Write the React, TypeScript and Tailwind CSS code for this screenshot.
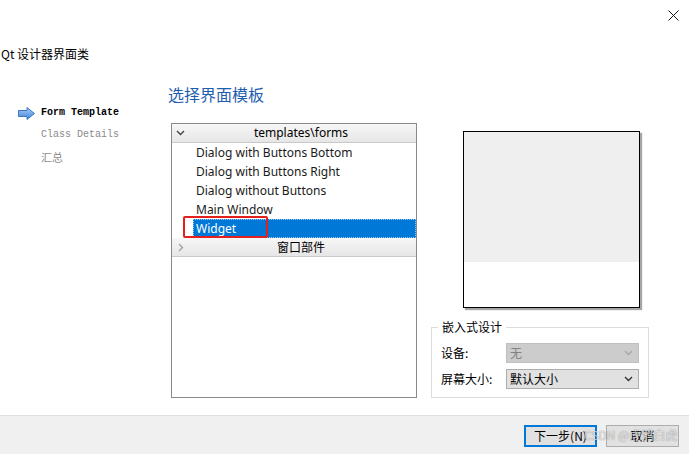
import React from "react";

const cjk = { fontFamily: '"Noto Sans CJK SC", "Noto Sans", sans-serif' };
const ui = { fontFamily: '"Noto Sans", "Noto Sans CJK SC", sans-serif' };
const mono = { fontFamily: '"Liberation Mono", "Noto Sans CJK SC", monospace' };

function ChevronDown({ color = "#444" }: { color?: string }) {
  return (
    <svg width="9" height="6" viewBox="0 0 9 6">
      <path d="M1 1 L4.5 4.5 L8 1" fill="none" stroke={color} strokeWidth="1.4" />
    </svg>
  );
}

function ChevronRight() {
  return (
    <svg width="6" height="9" viewBox="0 0 6 9">
      <path d="M1 1 L4.5 4.5 L1 8" fill="none" stroke="#a0a0a0" strokeWidth="1.3" />
    </svg>
  );
}

function Arrow() {
  return (
    <svg width="17" height="13" viewBox="0 0 17 13">
      <defs>
        <linearGradient id="ag" x1="0" y1="0" x2="0" y2="1">
          <stop offset="0" stopColor="#a9cdf5" />
          <stop offset="1" stopColor="#3f83d6" />
        </linearGradient>
      </defs>
      <path d="M0.5 3.5 H9 V0.5 L16.5 6.5 L9 12.5 V9.5 H0.5 Z" fill="url(#ag)" stroke="#3a78c4" strokeWidth="1" />
    </svg>
  );
}

function HeaderRow({ label, open }: { label: string; open: boolean }) {
  return (
    <div className="h-[19px] flex items-center bg-gradient-to-b from-[#f7f7f7] to-[#e6e6e6] border-b border-[#c9c9c9] relative">
      <div className="w-[14px] flex justify-center pl-[3px]">
        {open ? <ChevronDown /> : <ChevronRight />}
      </div>
      <div className="flex-1 text-center text-[12px] text-black leading-none" style={open ? ui : cjk}>
        {label}
      </div>
    </div>
  );
}

function Item({ label, selected }: { label: string; selected?: boolean }) {
  return (
    <div className="h-[19px] flex items-center pl-[21px]">
      <div
        className={
          selected
            ? "flex-1 h-full flex items-center bg-[#0078d7] text-white pl-[2px] border border-dotted border-[#9cc8ee]"
            : "flex-1 h-full flex items-center text-[#1a1a1a] pl-[3px]"
        }
      >
        <span className="text-[12px] leading-none" style={ui}>{label}</span>
      </div>
    </div>
  );
}

function Combo({ label, disabled }: { label: string; disabled?: boolean }) {
  return (
    <div
      className={
        disabled
          ? "w-[133px] h-[20px] flex items-center justify-between bg-[#cccccc] border border-[#bfbfbf] pl-[3px] pr-[5px]"
          : "w-[133px] h-[20px] flex items-center justify-between bg-[#e1e1e1] border border-[#adadad] pl-[3px] pr-[5px]"
      }
    >
      <span className={disabled ? "text-[12px] text-[#838383] leading-none" : "text-[12px] text-black leading-none"} style={cjk}>
        {label}
      </span>
      <ChevronDown color={disabled ? "#a8a8a8" : "#333"} />
    </div>
  );
}

export default function App() {
  return (
    <div className="w-[689px] h-[454px] bg-white flex flex-col relative overflow-hidden">
      {/* top bar */}
      <div className="h-[44px] flex justify-end items-start pt-[10px] pr-[10px]">
        <svg width="11" height="11" viewBox="0 0 11 11">
          <path d="M0.5 0.5 L10.5 10.5 M10.5 0.5 L0.5 10.5" stroke="#111" strokeWidth="1" />
        </svg>
      </div>
      <div className="h-[20px] flex items-center pl-[1px] text-[12px] text-black" style={cjk}>
        Qt 设计器界面类
      </div>

      {/* main */}
      <div className="flex-1 flex">
        {/* sidebar */}
        <div className="w-[168px] pt-[38px] flex flex-col" style={mono}>
          <div className="h-[22px] flex items-center pl-[18px]">
            <Arrow />
            <span className="ml-[6px] text-[10px] font-semibold text-black leading-none">Form Template</span>
          </div>
          <div className="h-[22px] flex items-center pl-[41px]">
            <span className="text-[10px] text-[#8a8a8a] leading-none">Class Details</span>
          </div>
          <div className="h-[22px] flex items-center pl-[41px]">
            <span className="text-[11px] text-[#8a8a8a] leading-none" style={cjk}>汇总</span>
          </div>
        </div>

        {/* middle */}
        <div className="w-[249px] flex flex-col">
          <div className="h-[59px] flex items-start pt-[22px]">
            <span className="text-[16px] text-[#1f5db0] leading-none" style={cjk}>选择界面模板</span>
          </div>
          <div className="ml-[3px] w-[246px] h-[275px] border border-[#868a8e] bg-white flex flex-col relative">
            <HeaderRow label="templates\forms" open />
            <Item label="Dialog with Buttons Bottom" />
            <Item label="Dialog with Buttons Right" />
            <Item label="Dialog without Buttons" />
            <Item label="Main Window" />
            <Item label="Widget" selected />
            <HeaderRow label="窗口部件" open={false} />
            <div className="absolute left-[11px] top-[92px] w-[85px] h-[22px] border-2 border-[#e3201b] rounded-[2px]" />
          </div>
        </div>

        {/* right */}
        <div className="flex-1 flex flex-col">
          <div className="pt-[67px] pl-[46px]">
            <div className="w-[177px] h-[177px] border border-black bg-white flex flex-col shadow-[2px_2px_1px_rgba(0,0,0,0.35)]">
              <div className="h-[130px] bg-[#efefef]" />
            </div>
          </div>
          <div className="mt-[19px] ml-[14px] w-[218px] h-[71px] border border-[#dcdcdc] relative flex flex-col pl-[9px] pt-[15px] gap-[6px]">
            <div className="absolute left-[6px] top-[-8px] bg-white px-[4px] text-[12px] leading-[14px] text-black" style={cjk}>
              嵌入式设计
            </div>
            <div className="flex items-center">
              <span className="w-[65px] text-[12px] text-black" style={cjk}>设备:</span>
              <Combo label="无" disabled />
            </div>
            <div className="flex items-center">
              <span className="w-[65px] text-[12px] text-black" style={cjk}>屏幕大小:</span>
              <Combo label="默认大小" />
            </div>
          </div>
        </div>
      </div>

      {/* bottom bar */}
      <div className="h-[39px] bg-[#f0f0f0] border-t border-[#dfdfdf] flex items-start justify-end pt-[9px] pr-[10px] gap-[9px]">
        <div className="w-[73px] h-[22px] bg-[#e1e1e1] border-2 border-[#0078d7] flex items-center justify-center text-[12px] text-black" style={cjk}>
          下一步(N)
        </div>
        <div className="w-[73px] h-[22px] bg-[#e1e1e1] border border-[#adadad] flex items-center justify-center text-[12px] text-black" style={cjk}>
          取消
        </div>
      </div>
      <div className="absolute left-[584px] top-[429px] text-[12px] leading-none text-[rgba(255,255,255,0.7)] [text-shadow:0_0_1px_rgba(0,0,0,0.5)]" style={cjk}>
        CSDN @虎鸦白虎
      </div>
    </div>
  );
}
